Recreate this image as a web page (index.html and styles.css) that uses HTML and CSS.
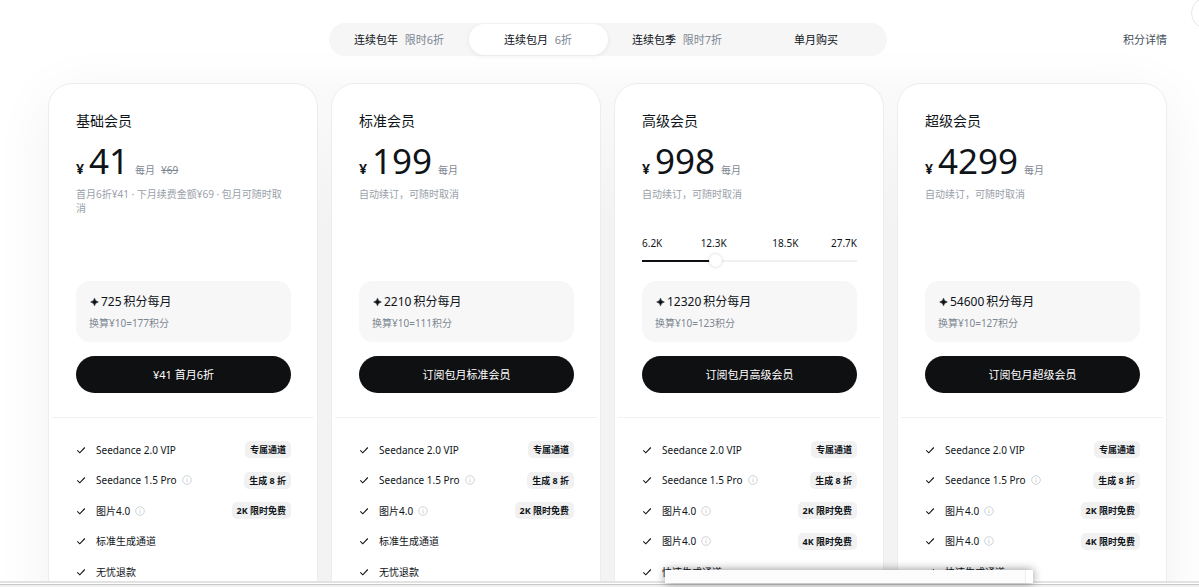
FILE: index.html
```html
<!DOCTYPE html>
<html lang="zh-CN">
<head>
    <meta charset="utf-8">
    <title>会员订阅</title>
    <link rel="stylesheet" href="styles.css">
</head>
<body>
    <!-- shared icons -->
    <svg class="sprite" aria-hidden="true">
        <symbol id="check" viewBox="0 0 10 10"><path d="M1.3 5.4 3.8 7.8 8.8 2.5" fill="none" stroke="currentColor" stroke-width="1.1"/></symbol>
        <symbol id="info" viewBox="0 0 10 10"><circle cx="5" cy="5" r="4.3" fill="none" stroke="currentColor" stroke-width=".8"/><path d="M5 4.4V7.3M5 2.7V3.6" stroke="currentColor" stroke-width=".9"/></symbol>
        <symbol id="star" viewBox="0 0 10 10"><path d="M5.5 1.2Q6.1 4.4 9.3 5 6.1 5.6 5.5 8.8 4.9 5.6 1.7 5 4.9 4.4 5.5 1.2Z" fill="currentColor" stroke="currentColor" stroke-width=".6"/></symbol>
    </svg>

    <main>
        <header class="header">
            <nav class="tabs">
                <button class="tab">连续包年 <span>限时6折</span></button>
                <button class="tab active">连续包月 <span>6折</span></button>
                <button class="tab">连续包季 <span>限时7折</span></button>
                <button class="tab">单月购买</button>
            </nav>
            <a class="detail" href="#">积分详情</a>
        </header>
        <button class="close" aria-label="关闭"></button>

        <div class="plans">
            <section class="card">
                <div class="card-top">
                    <h2>基础会员</h2>
                    <div class="price"><b>¥</b><strong>41</strong><span>每月</span><del>¥69</del></div>
                    <p class="desc">首月6折¥41 · 下月续费金额¥69 · 包月可随时取消</p>
                </div>
                <div class="card-buy">
                    <div class="credits">
                        <div class="amount"><svg class="star"><use href="#star"/></svg>725<span>积分每月</span></div>
                        <div class="rate">换算¥10=177积分</div>
                    </div>
                    <button class="buy">¥41 首月6折</button>
                </div>
                <ul class="features">
                    <li><svg class="check"><use href="#check"/></svg>Seedance 2.0 VIP<span class="tag">专属通道</span></li>
                    <li><svg class="check"><use href="#check"/></svg>Seedance 1.5 Pro<svg class="info"><use href="#info"/></svg><span class="tag">生成 8 折</span></li>
                    <li><svg class="check"><use href="#check"/></svg>图片4.0<svg class="info"><use href="#info"/></svg><span class="tag">2K 限时免费</span></li>
                    <li><svg class="check"><use href="#check"/></svg>标准生成通道</li>
                    <li><svg class="check"><use href="#check"/></svg>无忧退款</li>
                </ul>
            </section>

            <section class="card">
                <div class="card-top">
                    <h2>标准会员</h2>
                    <div class="price"><b>¥</b><strong>199</strong><span>每月</span></div>
                    <p class="desc">自动续订，可随时取消</p>
                </div>
                <div class="card-buy">
                    <div class="credits">
                        <div class="amount"><svg class="star"><use href="#star"/></svg>2210<span>积分每月</span></div>
                        <div class="rate">换算¥10=111积分</div>
                    </div>
                    <button class="buy">订阅包月标准会员</button>
                </div>
                <ul class="features">
                    <li><svg class="check"><use href="#check"/></svg>Seedance 2.0 VIP<span class="tag">专属通道</span></li>
                    <li><svg class="check"><use href="#check"/></svg>Seedance 1.5 Pro<svg class="info"><use href="#info"/></svg><span class="tag">生成 8 折</span></li>
                    <li><svg class="check"><use href="#check"/></svg>图片4.0<svg class="info"><use href="#info"/></svg><span class="tag">2K 限时免费</span></li>
                    <li><svg class="check"><use href="#check"/></svg>标准生成通道</li>
                    <li><svg class="check"><use href="#check"/></svg>无忧退款</li>
                </ul>
            </section>

            <section class="card">
                <div class="card-top">
                    <h2>高级会员</h2>
                    <div class="price"><b>¥</b><strong>998</strong><span>每月</span></div>
                    <p class="desc">自动续订，可随时取消</p>
                    <div class="picker">
                        <label class="steps" for="amount"><span>6.2K</span><span>12.3K</span><span>18.5K</span><span>27.7K</span></label>
                        <input class="slider" id="amount" type="range" min="0" max="3" value="1">
                    </div>
                </div>
                <div class="card-buy">
                    <div class="credits">
                        <div class="amount"><svg class="star"><use href="#star"/></svg>12320<span>积分每月</span></div>
                        <div class="rate">换算¥10=123积分</div>
                    </div>
                    <button class="buy">订阅包月高级会员</button>
                </div>
                <ul class="features">
                    <li><svg class="check"><use href="#check"/></svg>Seedance 2.0 VIP<span class="tag">专属通道</span></li>
                    <li><svg class="check"><use href="#check"/></svg>Seedance 1.5 Pro<svg class="info"><use href="#info"/></svg><span class="tag">生成 8 折</span></li>
                    <li><svg class="check"><use href="#check"/></svg>图片4.0<svg class="info"><use href="#info"/></svg><span class="tag">2K 限时免费</span></li>
                    <li><svg class="check"><use href="#check"/></svg>图片4.0<svg class="info"><use href="#info"/></svg><span class="tag">4K 限时免费</span></li>
                    <li><svg class="check"><use href="#check"/></svg>快速生成通道</li>
                </ul>
            </section>

            <section class="card">
                <div class="card-top">
                    <h2>超级会员</h2>
                    <div class="price"><b>¥</b><strong>4299</strong><span>每月</span></div>
                    <p class="desc">自动续订，可随时取消</p>
                </div>
                <div class="card-buy">
                    <div class="credits">
                        <div class="amount"><svg class="star"><use href="#star"/></svg>54600<span>积分每月</span></div>
                        <div class="rate">换算¥10=127积分</div>
                    </div>
                    <button class="buy">订阅包月超级会员</button>
                </div>
                <ul class="features">
                    <li><svg class="check"><use href="#check"/></svg>Seedance 2.0 VIP<span class="tag">专属通道</span></li>
                    <li><svg class="check"><use href="#check"/></svg>Seedance 1.5 Pro<svg class="info"><use href="#info"/></svg><span class="tag">生成 8 折</span></li>
                    <li><svg class="check"><use href="#check"/></svg>图片4.0<svg class="info"><use href="#info"/></svg><span class="tag">2K 限时免费</span></li>
                    <li><svg class="check"><use href="#check"/></svg>图片4.0<svg class="info"><use href="#info"/></svg><span class="tag">4K 限时免费</span></li>
                    <li><svg class="check"><use href="#check"/></svg>快速生成通道</li>
                </ul>
            </section>
        </div>
    </main>
    <div class="popup"></div>
    <footer class="bottom-bar"></footer>
</body>
</html>
```
FILE: styles.css
```css
* {
    box-sizing: border-box;
}
body {
    margin: 0;
    height: 100vh;
    display: flex;
    flex-direction: column;
    position: relative;
    overflow: hidden;
    background: #fff;
    color: #0f1419;
    font-family: "Noto Sans", "Noto Sans CJK SC", sans-serif;
    font-size: 11px;
    line-height: 16px;
}
button {
    font: inherit;
    color: inherit;
    border: none;
    cursor: pointer;
}
.sprite {
    display: none;
}
main {
    flex: 1;
    min-height: 0;
    overflow: hidden;
    padding: 23px 32px 0 48px;
}

/* billing period */
.header {
    display: grid;
    grid-template-columns: 1fr minmax(0, 558px) 1fr;
    align-items: center;
    margin-bottom: 27px;
}
.tabs {
    grid-column: 2;
    display: grid;
    grid-template-columns: repeat(4, 1fr);
    padding: 1px;
    border-radius: 17px;
    background: #f6f6f6;
    position: relative;
    z-index: 1;
}
.tab {
    height: 31px;
    padding: 0;
    border-radius: 16px;
    background: none;
}
.tab span {
    color: #7d8792;
    margin-left: 4px;
}
.tab.active {
    background: #fff;
    box-shadow: 0 1px 5px rgba(0, 0, 0, .07);
}
.detail {
    justify-self: end;
    color: #45505c;
    text-decoration: none;
}
.close {
    position: absolute;
    top: -3px;
    right: -24px;
    width: 32px;
    height: 32px;
    border: 1px solid #e8e8e8;
    border-radius: 50%;
    background: #fff;
}

/* plans */
.plans {
    display: grid;
    grid-template-columns: repeat(4, 1fr);
    gap: 13px;
    border-radius: 24px;
    background: linear-gradient(#fafafa, #f3f3f3 140px);
    box-shadow: 0 12px 60px rgba(0, 0, 0, .06);
}
.card {
    height: 560px;
    border: 1px solid #ededed;
    border-radius: 24px;
    background: #fff;
}
.card-top {
    height: 197px;
    padding: 27px 26px 0 27px;
    display: flex;
    flex-direction: column;
}
.card h2 {
    margin: 0;
    font-size: 14px;
    line-height: 20px;
    font-weight: 400;
}
.price {
    display: flex;
    align-items: baseline;
    height: 40px;
    line-height: 40px;
    margin-top: 10px;
    color: #7d8792;
    font-size: 10px;
}
.price b {
    color: #0f1419;
    font-size: 14px;
    margin-right: 5px;
}
.price strong {
    color: #0f1419;
    font-size: 35px;
    font-weight: 400;
    margin-right: 6px;
}
.price del {
    margin-left: 6px;
}
.desc {
    margin: 6px 0 0;
    padding-right: 4px;
    color: #9aa1a9;
    font-size: 10px;
    line-height: 14px;
}
.picker {
    margin-top: auto;
    padding-bottom: 14px;
}
.steps {
    display: grid;
    grid-template-columns: 1fr 2fr 2fr 1fr;
    font-size: 10px;
    line-height: 14px;
    text-align: center;
}
.steps span:first-child {
    text-align: left;
}
.steps span:last-child {
    text-align: right;
}
.slider {
    display: block;
    width: 100%;
    height: 13px;
    margin: 4px 0 0;
    appearance: none;
    background: linear-gradient(to right, #0f1014 33%, #f0f0f0 33%) center / 100% 2px no-repeat;
}
.slider::-webkit-slider-thumb {
    appearance: none;
    width: 13px;
    height: 13px;
    border-radius: 50%;
    background: #fff;
    box-shadow: 0 0 3px rgba(0, 0, 0, .2);
}

/* credits and subscribe button */
.card-buy {
    padding: 0 26px 25px 27px;
    margin: 0 0 23px;
    background: linear-gradient(#f1f1f1, #f1f1f1) bottom / calc(100% - 6px) 1px no-repeat;
}
.credits {
    padding: 11px 13px;
    border-radius: 14px;
    background: #f7f7f7;
}
.amount {
    display: flex;
    align-items: center;
    font-size: 12px;
    line-height: 20px;
}
.amount span {
    margin-left: 2px;
}
.star {
    width: 10px;
    height: 10px;
    margin-right: 2px;
}
.rate {
    margin-top: 3px;
    color: #7d8792;
    font-size: 10px;
}
.buy {
    display: block;
    width: 100%;
    height: 37px;
    margin-top: 14px;
    border-radius: 19px;
    background: #0f1012;
    color: #fff;
}

/* feature list */
.features {
    height: 139px;
    margin: 0;
    padding: 0 26px 0 27px;
    list-style: none;
    display: flex;
    flex-direction: column;
    justify-content: space-between;
    font-size: 10px;
}
.features li {
    display: flex;
    align-items: center;
    height: 17px;
}
.check {
    width: 10px;
    height: 10px;
    margin-right: 10px;
}
.info {
    width: 10px;
    height: 10px;
    margin-left: 5px;
    color: #c3c8cd;
}
.tag {
    margin-left: auto;
    padding: 0 5px;
    border-radius: 5px;
    background: #f1f1f1;
    font-size: 9px;
    line-height: 17px;
    font-weight: 700;
}

/* window edge along the bottom */
.popup {
    position: absolute;
    left: 665px;
    bottom: 4px;
    width: 368px;
    height: 13px;
    background: linear-gradient(to left, #fff 7px, #eee 7px, #eee 8px, #fcfcfc 8px);
    box-shadow: 0 0 10px rgba(0, 0, 0, .45);
}
.bottom-bar {
    height: 6px;
    border-top: 2px solid #e2e2e2;
    border-bottom: 2px solid #f0f0f0;
    background: linear-gradient(#fff 1px, #c8c8c8 1px);
}
```
